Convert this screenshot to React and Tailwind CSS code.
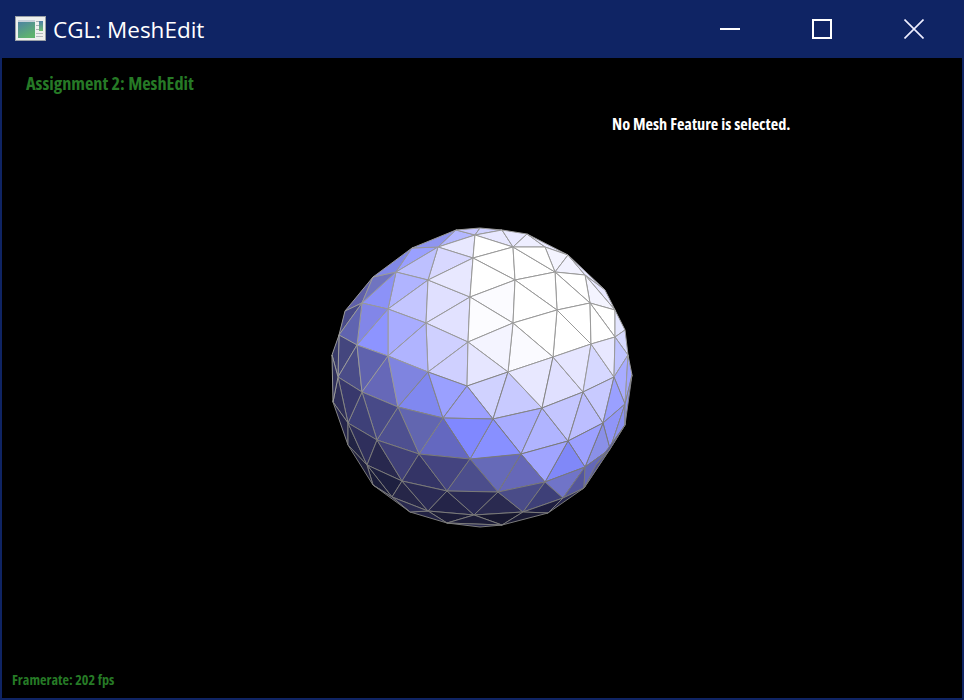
const V = {
  a:[456,230],tp:[480,228],b:[475,235],c:[502,230],d:[527,234],e:[545,247],f:[513,247],g:[438,247],h:[412,248],i:[473,258],j:[396,272],k:[428,280],l:[515,280],m:[555,272],n:[568,255],o:[585,275],p:[605,290],q:[373,277],r:[362,303],s:[388,309],t:[470,297],u:[426,323],v:[513,323],w:[557,310],x:[590,303],y:[615,310],z:[345,311],
  aa:[339,335],ab:[357,345],ac:[388,356],ad:[428,372],ae:[468,342],af:[508,372],ag:[553,357],ah:[591,344],ai:[615,337],aj:[625,330],ak:[628,355],al:[632,375],am:[332,355],an:[338,377],ap:[362,392],aq:[333,402],ar:[398,407],as:[467,386],at:[443,418],au:[493,419],av:[542,408],aw:[583,392],ax:[614,377],ay:[625,404],az:[603,423],
  ba:[568,441],bb:[521,454],bc:[610,449],bd:[585,467],be:[545,482],bf:[498,492],bg:[470,459],bh:[419,454],bi:[377,440],bj:[348,423],bk:[348,445],bl:[367,465],bm:[402,481],bn:[447,491],bo:[373,485],bp:[392,497],bq:[428,511],br:[410,512],bs:[447,523],bt:[474,515],bu:[502,525],bv:[523,512],bw:[563,498],bx:[584,488],by:[548,513],bz:[480,527],ca:[625,425],cb:[596,465],
};
const T = [
  ["q","r","z","#5f60a8"],["q","j","r","#7074c0"],["q","h","j","#8088e8"],["h","g","j","#9aa0ff"],["h","a","g","#8f95f0"],["a","b","g","#b4b8ff"],["a","tp","b","#c8c8ff"],["tp","c","b","#d0d2ff"],["b","i","g","#e8e8ff"],["g","i","k","#d8d8ff"],["g","k","j","#bdc0ff"],
  ["j","k","s","#b0b4ff"],["j","s","r","#8c92f8"],["k","u","s","#c4c6ff"],["k","t","u","#e0e0ff"],["i","t","k","#e8e8ff"],["s","u","ac","#a8acff"],["r","s","ab","#8286e8"],["s","ac","ab","#8d94ff"],["z","r","aa","#484a88"],["r","ab","aa","#6064b0"],
  ["u","t","ae","#e2e2ff"],["u","ae","ad","#cfd0ff"],["u","ad","ac","#b0b4ff"],
  ["b","c","f","#e8e8ff"],["c","d","f","#e8e8ff"],["f","d","e","#eeeeff"],["d","n","e","#e8e8ff"],["e","n","m","#f4f4ff"],["m","n","o","#f2f2ff"],["n","p","o","#e6e6ff"],["o","p","y","#e8e8ff"],["o","y","x","#f4f4ff"],["x","y","ai","#ffffff"],["y","aj","ai","#e4e6ff"],["ai","aj","ak","#d8daff"],
  ["b","f","i","#ffffff"],["i","f","l","#ffffff"],["f","m","l","#ffffff"],["f","e","m","#ffffff"],["m","o","x","#ffffff"],["m","x","w","#ffffff"],["l","m","w","#ffffff"],["i","l","t","#ffffff"],["t","l","v","#fbfbff"],["l","w","v","#ffffff"],["w","x","ah","#ffffff"],["x","ai","ah","#ffffff"],["w","ah","ag","#ffffff"],["v","w","ag","#ffffff"],["v","ag","af","#fafaff"],["t","v","ae","#fcfcff"],["ae","v","af","#f4f4ff"],
  ["ad","ae","as","#cfd0ff"],["ae","af","as","#e6e6ff"],["as","af","au","#d0d2ff"],["af","av","au","#c8caff"],["af","ag","av","#e8e8ff"],["ag","aw","av","#e0e0ff"],["ag","ah","aw","#e6e6ff"],["ah","ax","aw","#d6d8ff"],["ah","ai","ax","#e8e8ff"],["ai","ak","ax","#c0c4ff"],["ak","ay","ax","#a8acff"],["ak","al","ay","#9fa4ff"],
  ["aa","ab","an","#44467e"],["aa","an","am","#383a68"],["an","ab","ap","#4a4c88"],["ab","ac","ap","#5f62ae"],["ac","ar","ap","#6668b8"],["ac","ad","ar","#7f84e0"],["ad","at","ar","#8088f0"],["ad","as","at","#9aa0ff"],["as","au","at","#9ca0ff"],
  ["au","av","bb","#a8acff"],["av","ba","bb","#b0b4ff"],["av","aw","ba","#c4c6ff"],["aw","az","ba","#bcbeff"],["aw","ax","az","#c8caff"],["ax","ay","az","#9aa0ff"],["az","ay","bc","#9095f8"],["ay","ca","bc","#8a90f0"],["ay","al","ca","#9095f0"],
  ["az","bc","bd","#8a90e8"],["ba","az","bd","#9ca0ff"],["ba","bd","be","#8088f8"],["bb","ba","be","#a0a4ff"],["bb","be","bf","#6668b8"],["bg","bb","bf","#666ab8"],["au","bb","bg","#8890ff"],["at","au","bg","#8088ff"],
  ["at","bg","bh","#6468c0"],["ar","at","bh","#6266b0"],["ar","bh","bi","#4e5090"],["ap","ar","bi","#484a88"],["ap","bi","bj","#3e4078"],["an","ap","bj","#38386c"],["an","bj","aq","#2e2e58"],["am","an","aq","#2e2e58"],["aq","bj","bk","#25254a"],["bj","bl","bk","#222444"],["bj","bi","bl","#2f2f5c"],["bi","bm","bl","#28284e"],["bi","bh","bm","#404078"],["bh","bn","bm","#343466"],["bh","bg","bn","#444480"],["bg","bf","bn","#4c4e8c"],
  ["bl","bm","bp","#1e2040"],["bl","bp","bo","#1a1c38"],["bk","bl","bo","#1f1f3c"],["bm","bq","bp","#262648"],["bm","bn","bq","#2a2a54"],["bn","bt","bq","#242448"],["bn","bf","bt","#2a2a54"],["bq","bs","bt","#1c1c38"],["bq","br","bs","#222244"],["bp","br","bq","#2a2a50"],["bo","br","bp","#1e1e3c"],
  ["bf","bv","bt","#2a2a50"],["bf","be","bv","#4a4c88"],["be","bw","bv","#3e4078"],["be","bd","bw","#7074c8"],["bd","bx","bw","#54569c"],["bd","bc","bx","#6468b8"],["bc","cb","bx","#54569c"],["bc","ca","cb","#54569c"],["bt","bv","bu","#181830"],["bt","bu","bs","#1c1c38"],["bs","bu","bz","#2a2a50"],["bv","bw","by","#1e1e40"],["bv","by","bu","#1a1a34"],["bw","bx","by","#2a2a50"],
];

function Sphere() {
  return (
    <svg className="absolute left-[323px] top-[164px]" width="316" height="310" viewBox="325 222 316 310">
      {T.map(([p, q, r, fill], idx) => {
        const pts = [V[p], V[q], V[r]];
        const cy = (pts[0][1] + pts[1][1] + pts[2][1]) / 3;
        const stroke = cy > 440 ? "#7a7a7a" : cy > 385 ? "#858585" : "#9a9a9a";
        return <polygon key={idx} points={pts.map((c) => c.join(",")).join(" ")} fill={fill} stroke={stroke} strokeWidth="1" strokeLinejoin="round" />;
      })}
    </svg>
  );
}

function AppIcon() {
  return (
    <svg width="31" height="25" viewBox="0 0 31 25" className="shrink-0">
      <defs>
        <linearGradient id="ic" x1="0" y1="0" x2="0.5" y2="1">
          <stop offset="0" stopColor="#4d7fa8" />
          <stop offset="1" stopColor="#5fb36e" />
        </linearGradient>
        <linearGradient id="ic2" x1="0" y1="0" x2="0" y2="1">
          <stop offset="0" stopColor="#4d7fa8" />
          <stop offset="1" stopColor="#6fbf70" />
        </linearGradient>
      </defs>
      <rect x="0.5" y="0.5" width="30" height="24" fill="#eef0ee" stroke="#9aa0a6" />
      <rect x="3" y="4" width="17" height="18" fill="url(#ic)" />
      <rect x="3" y="4" width="17" height="2" fill="#c8d2da" />
      <rect x="24" y="5" width="4" height="10" fill="url(#ic2)" />
      <rect x="21" y="5" width="3" height="1" fill="#a8b0b4" />
      <rect x="21" y="9" width="3" height="1" fill="#a8b0b4" />
      <rect x="21" y="13" width="3" height="1" fill="#a8b0b4" />
      <rect x="21" y="17" width="7" height="1" fill="#b4babe" />
      <rect x="21" y="20" width="7" height="1" fill="#b4babe" />
    </svg>
  );
}

export default function App() {
  const label = { fontStretch: "75%" };
  return (
    <div className="w-[964px] h-[700px] flex flex-col bg-[#0f2464] overflow-hidden">
      <header className="h-[58px] shrink-0 flex items-center pl-[15px] pb-[1px]">
        <AppIcon />
        <span className="ml-[7px] pt-[3px] text-[22.5px] text-white font-['Open_Sans',sans-serif] leading-none">CGL: MeshEdit</span>
        <div className="ml-auto flex items-center">
          <svg width="20" height="20" viewBox="0 0 20 20" className="mr-[72px]"><rect x="0" y="9" width="20" height="2" fill="#fff" /></svg>
          <svg width="20" height="20" viewBox="0 0 20 20" className="mr-[72px]"><rect x="1" y="1" width="18" height="18" fill="none" stroke="#fff" strokeWidth="2" /></svg>
          <svg width="20" height="20" viewBox="0 0 20 20" className="mr-[40px]"><path d="M0.5 0.5 L19.5 19.5 M19.5 0.5 L0.5 19.5" stroke="#eef" strokeWidth="1.6" /></svg>
        </div>
      </header>
      <main className="relative flex-1 mx-[2px] mb-[2px] bg-black flex flex-col font-['Open_Sans',sans-serif] font-bold">
        <div className="pl-[24px] pt-[15px] text-[18.3px] leading-[20px] text-[#267a26]" style={label}>Assignment 2: MeshEdit</div>
        <div className="pl-[610px] pt-[21px] text-[16.3px] leading-[20px] text-white" style={label}>No Mesh Feature is selected.</div>
        <Sphere />
        <div className="mt-auto pl-[10px] pb-[10px] text-[14.2px] leading-[16px] text-[#267a26]" style={label}>Framerate: 202 fps</div>
      </main>
    </div>
  );
}
